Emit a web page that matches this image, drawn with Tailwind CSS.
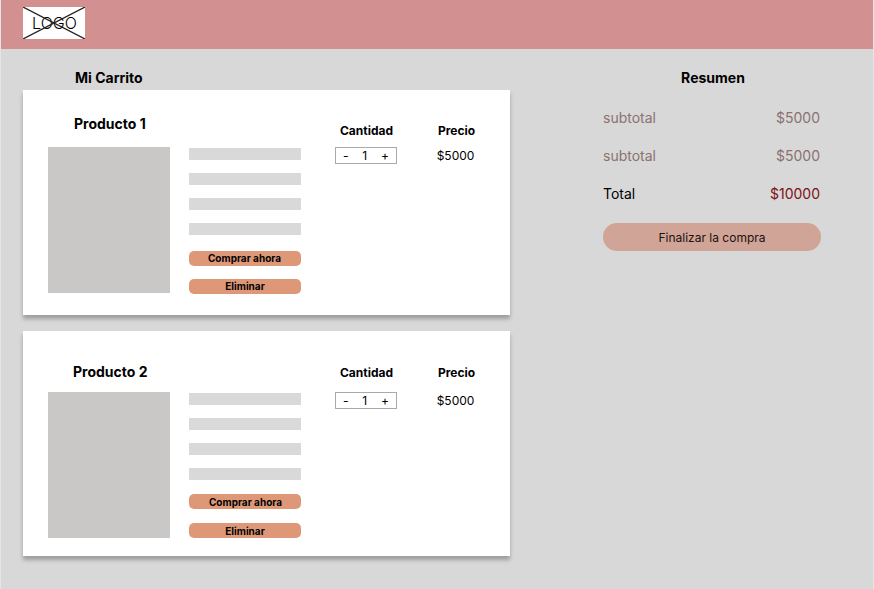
<!DOCTYPE html>
<html lang="es">
<head>
<meta charset="utf-8">
<title>Mi Carrito</title>
<script src="https://cdn.jsdelivr.net/npm/@tailwindcss/browser@4"></script>
</head>
<body class="bg-[#d8d8d8] font-['Inter',sans-serif] text-black">
<div class="h-[589px] w-[874px] overflow-hidden border-x border-[#e6e4e4]">
  <header class="flex h-[49px] bg-[#d39090] pt-[7px] pl-[22px]">
    <div class="relative flex h-8 w-[62px] items-center justify-center bg-white">
      <span class="pl-px text-[16px] leading-8 font-light">LOGO</span>
      <svg class="absolute inset-0" width="62" height="32" viewBox="0 0 62 32" stroke="#222" stroke-width="1.3"><path d="M0 0 62 32M0 32 62 0"/></svg>
    </div>
  </header>
  <main class="flex pl-[22px]">
    <section class="w-[487px] pt-[19px]">
      <h1 class="h-[22px] pl-[52px] text-[14px] leading-5 font-bold">Mi Carrito</h1>
      <article class="flex h-[225px] bg-white pl-[25px] shadow-[0_4px_4px_rgba(0,0,0,0.27)]">
        <div class="w-[122px] pt-6">
          <h2 class="h-[33px] pl-[26px] text-[14px] leading-5 font-bold">Producto 1</h2>
          <div class="h-[146px] bg-[#c9c8c6]"></div>
        </div>
        <div class="ml-[19px] w-28 pt-[58px]">
          <div class="flex flex-col gap-[13px]">
            <div class="h-3 bg-[#d9d9d9]"></div><div class="h-3 bg-[#d9d9d9]"></div><div class="h-3 bg-[#d9d9d9]"></div><div class="h-3 bg-[#d9d9d9]"></div>
          </div>
          <button class="mt-4 block h-[15px] w-full rounded-[5px] bg-[#de9878] pr-px text-[10px] leading-[15px] font-bold">Comprar ahora</button>
          <button class="mt-[13px] block h-[15px] w-full rounded-[5px] bg-[#de9878] text-[10px] leading-[15px] font-bold">Eliminar</button>
        </div>
        <div class="ml-[34px] w-[62px] pt-8">
          <h3 class="h-[25px] pl-px text-center text-[12px] leading-[18px] font-bold">Cantidad</h3>
          <div class="flex h-[17px] items-center justify-between border border-[#aaa] px-[7px] text-[12px] leading-[15px]"><span>-</span><span>1</span><span>+</span></div>
        </div>
        <div class="ml-[28px] w-[62px] pt-8 text-center text-[12px]">
          <h3 class="h-[25px] pl-px leading-[18px] font-bold">Precio</h3>
          <p class="pr-px leading-[17px]">$5000</p>
        </div>
      </article>
      <article class="mt-4 flex h-[225px] bg-white pl-[25px] shadow-[0_4px_4px_rgba(0,0,0,0.27)]">
        <div class="w-[122px] pt-[31px]">
          <h2 class="h-[30px] pl-[25px] text-[14px] leading-5 font-bold">Producto 2</h2>
          <div class="h-[146px] bg-[#c9c8c6]"></div>
        </div>
        <div class="ml-[19px] w-28 pt-[62px]">
          <div class="flex flex-col gap-[13px]">
            <div class="h-3 bg-[#d9d9d9]"></div><div class="h-3 bg-[#d9d9d9]"></div><div class="h-3 bg-[#d9d9d9]"></div><div class="h-3 bg-[#d9d9d9]"></div>
          </div>
          <button class="mt-3.5 block h-[15px] w-full rounded-[5px] bg-[#de9878] pl-px text-[10px] leading-[17px] font-bold">Comprar ahora</button>
          <button class="mt-[14px] block h-[15px] w-full rounded-[5px] bg-[#de9878] text-[10px] leading-[17px] font-bold">Eliminar</button>
        </div>
        <div class="ml-[34px] w-[62px] pt-[33px]">
          <h3 class="h-[28px] pl-px text-center text-[12px] leading-[18px] font-bold">Cantidad</h3>
          <div class="flex h-[17px] items-center justify-between border border-[#aaa] px-[7px] text-[12px] leading-[15px]"><span>-</span><span>1</span><span>+</span></div>
        </div>
        <div class="ml-[28px] w-[62px] pt-[33px] text-center text-[12px]">
          <h3 class="h-[28px] pl-px leading-[18px] font-bold">Precio</h3>
          <p class="pr-px leading-[17px]">$5000</p>
        </div>
      </article>
    </section>
    <aside class="ml-[93px] w-[218px] pt-[19px] text-[14px] leading-5">
      <h2 class="pl-0.5 text-center font-bold">Resumen</h2>
      <div class="mt-5 flex justify-between pr-px text-[#8a7270]"><span>subtotal</span><span>$5000</span></div>
      <div class="mt-[18px] flex justify-between pr-px text-[#8a7270]"><span>subtotal</span><span>$5000</span></div>
      <div class="mt-[18px] flex justify-between pr-px"><span>Total</span><span class="text-[#7d1016]">$10000</span></div>
      <button class="mt-[19px] block h-7 w-full rounded-full bg-[#d0a497] pt-px text-[12px] leading-[27px] text-[#241010]">Finalizar la compra</button>
    </aside>
  </main>
</div>
</body>
</html>
